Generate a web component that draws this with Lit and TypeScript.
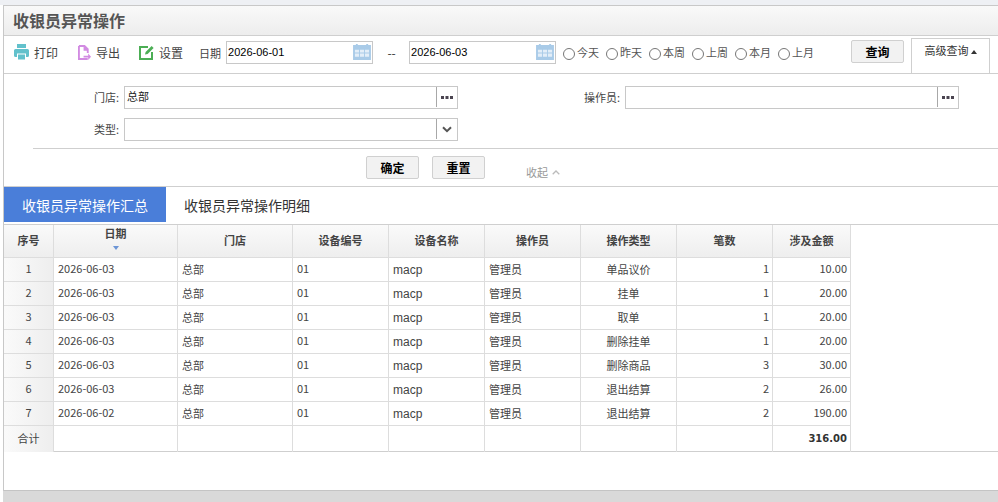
import { LitElement, html, css, svg } from 'lit';
import { customElement } from 'lit/decorators.js';

const columns = ['日期', '门店', '设备编号', '设备名称', '操作员', '操作类型', '笔数', '涉及金额'];

const rows = [
  ['2026-06-03', '单品议价', '1', '10.00'],
  ['2026-06-03', '挂单', '1', '20.00'],
  ['2026-06-03', '取单', '1', '20.00'],
  ['2026-06-03', '删除挂单', '1', '20.00'],
  ['2026-06-03', '删除商品', '3', '30.00'],
  ['2026-06-03', '退出结算', '2', '26.00'],
  ['2026-06-02', '退出结算', '2', '190.00'],
];

const ranges = ['今天', '昨天', '本周', '上周', '本月', '上月'];

const calendarIcon = svg`<svg class="cal" width="18" height="16" viewBox="0 0 19 17">
  <path d="M0 1h3v-1h2v1h9v-1h2v1h3v16h-19z" fill="#a9cbe8"/>
  <path d="M2 6h4.300v3h-4.300zM7.300 6h4.400v3h-4.400zM12.700 6h4.300v3h-4.300zM2 10h4.300v3.500h-4.300zM7.300 10h4.400v3.500h-4.400zM12.700 10h4.300v3.500h-4.300z" fill="#e3eef8"/>
</svg>`;

const moreIcon = svg`<svg width="12" height="3" viewBox="0 0 12 3"><path d="M0 0h3v3h-3zM4.500 0h3v3h-3zM9 0h3v3h-3z" fill="#4a4450"/></svg>`;

const chevronIcon = svg`<svg width="10" height="7" viewBox="0 0 10 7"><path d="M1 1.200l4 4 4-4" fill="none" stroke="#555" stroke-width="2"/></svg>`;

const printIcon = svg`<svg width="15" height="16" viewBox="0 0 15 16">
  <path d="M3 0h9v4h-9zM1.500 5h12a1.500 1.500 0 0 1 1.500 1.500v5a1.500 1.500 0 0 1-1.500 1.500h-1.500v-3.500h-9v3.500h-1.500a1.500 1.500 0 0 1-1.500-1.500v-5a1.500 1.500 0 0 1 1.500-1.500zM4 10.500h7v5h-7z" fill="#62c1cc"/>
</svg>`;

const exportIcon = svg`<svg width="13" height="15" viewBox="0 0 14 16">
  <path d="M1 1h6l3.500 3.500v4M10.500 15h-9.500v-14M7 1v4h3.500" fill="none" stroke="#d28be2" stroke-width="2"/>
  <path d="M6 11.500h5v-2.500l3 3.500-3 3.500v-2.500h-5z" fill="#d28be2"/>
</svg>`;

const settingIcon = svg`<svg width="15" height="15" viewBox="0 0 15 15">
  <path d="M9 2h-8v12h12v-7" fill="none" stroke="#4cae55" stroke-width="2"/>
  <path d="M6 9.500l.6-2.500 6-6 2 2-6 6z" fill="#4cae55"/>
</svg>`;

@customElement('app-root')
export class AppRoot extends LitElement {
  static styles = css`
    :host {
      display: block;
      height: 502px;
      overflow: hidden;
      background: #fff;
      color: #333;
      font: 12px 'Noto Sans CJK SC', 'Liberation Sans', sans-serif;
    }
    .page {
      height: 502px;
      display: flex;
      flex-direction: column;
      box-sizing: border-box;
      padding-top: 5px;
      background: linear-gradient(#eef0f4 5px, #fff 5px);
    }
    .frame {
      flex: none;
      height: 486px;
      box-sizing: border-box;
      margin-left: 3px;
      border-left: 1px solid #c8c8c8;
      border-top: 1px solid #c8c8c8;
      border-bottom: 1px solid #c4c4c4;
      background: #fff;
    }
    .footer {
      flex: 1;
      margin-left: 3px;
      background: #d9d9d9;
    }
    .title {
      height: 29px;
      box-sizing: border-box;
      padding: 0 9px;
      font-size: 16px;
      line-height: 28px;
      font-weight: 700;
      color: #555;
      background: linear-gradient(#f9f9f9, #ededed);
    }
    .toolbar {
      height: 39px;
      box-sizing: border-box;
      display: flex;
      align-items: center;
      padding: 0 8px 5px 10px;
      border-top: 1px solid #cfcfcf;
      border-bottom: 1px solid #cfcfcf;
    }
    .tool {
      display: flex;
      align-items: center;
      gap: 5px;
      color: #444;
      margin-right: 20px;
      white-space: nowrap;
    }
    .tool + .tool { margin-right: 19px; }
    .tool svg { flex: none; }
    .date-label { margin: 2px 5px 0 -3px; color: #444; font-size: 11px; }
    .date {
      width: 147px;
      height: 23px;
      box-sizing: border-box;
      display: flex;
      align-items: center;
      border: 1px solid #c8c8c8;
      padding-right: 1px;
      background: #fff;
    }
    .date input {
      flex: 1;
      min-width: 0;
      border: 0;
      outline: 0;
      padding: 0 0 0 1px;
      background: transparent;
      color: #000;
      font: 11px 'Liberation Sans', sans-serif;
    }
    .cal { flex: none; }
    .dash { width: 36px; padding-left: 1px; box-sizing: border-box; text-align: center; color: #333; }
    .ranges { display: flex; margin-left: 7px; }
    .range {
      display: flex;
      align-items: center;
      gap: 2px;
      width: 43px;
      color: #555;
      font-size: 11px;
      white-space: nowrap;
    }
    .range input { width: 12px; height: 12px; margin: 4px 0 0 0; flex: none; }
    .btn {
      height: 23px;
      box-sizing: border-box;
      padding: 0;
      border: 1px solid #d0d0d0;
      border-radius: 2px;
      background: #f2f2f2;
      color: #000;
      font: 700 12px 'Noto Sans CJK SC', sans-serif;
    }
    .query { width: 53px; margin-left: auto; margin-bottom: 2px; }
    .advanced {
      align-self: flex-start;
      width: 79px;
      height: 36px;
      box-sizing: border-box;
      margin: 2px 0 0 7px;
      border: 1px solid #cfcfcf;
      border-bottom: 0;
      text-align: center;
      font-size: 11px;
      line-height: 22px;
      color: #333;
      white-space: nowrap;
    }
    .advanced i {
      display: inline-block;
      border: 3px solid transparent;
      border-top: 0;
      border-bottom: 4px solid #333;
      margin-left: 2px;
      vertical-align: 1px;
    }
    .filter {
      height: 113px;
      box-sizing: border-box;
      padding-top: 12px;
      border-bottom: 1px solid #cfcfcf;
    }
    .fields {
      display: grid;
      grid-template-columns: 120px 334px 167px 334px;
      grid-auto-rows: 23px;
      row-gap: 9px;
      align-items: center;
    }
    .fields label { text-align: right; padding: 0 5px 2px 0; color: #444; font-size: 11px; }
    .field {
      height: 23px;
      box-sizing: border-box;
      display: flex;
      border: 1px solid #c8c8c8;
      background: #fff;
    }
    .field span {
      flex: 1;
      padding-left: 2px;
      font-size: 11px;
      line-height: 18px;
      color: #222;
    }
    .field b {
      width: 20px;
      display: flex;
      align-items: center;
      justify-content: center;
      border-left: 1px solid #a8a8a8;
      margin-bottom: 1px;
    }
    .rule { height: 1px; background: #cfcfcf; margin: 7px 0 7px 29px; }
    .actions { display: flex; padding-left: 362px; }
    .actions .btn { width: 53px; margin-right: 13px; }
    .collapse {
      display: flex;
      align-items: center;
      gap: 4px;
      margin: 8px 0 0 28px;
      color: #999;
      font-size: 11px;
      height: 16px;
    }
    .tabs {
      display: flex;
      height: 38px;
      box-sizing: border-box;
      padding-bottom: 2px;
      border-bottom: 1px solid #cfcfcf;
      font-size: 14px;
      line-height: 36px;
    }
    .tab { padding: 0 18px; color: #333; }
    .tab.active { background: #4a7ed9; color: #fff; }
    .table {
      height: 227px;
      box-sizing: border-box;
      border-bottom: 1px solid #cfcfcf;
      font-size: 11px;
    }
    .row {
      display: grid;
      grid-template-columns: 50px 124px 115px 96px 96px 96px 96px 96px 78px;
      grid-template-rows: 24px;
      width: 847px;
      height: 24px;
    }
    .row > div {
      box-sizing: border-box;
      border-right: 1px solid #ddd;
      border-bottom: 1px solid #ddd;
      padding: 0 4px;
      line-height: 23px;
      white-space: nowrap;
      color: #444;
    }
    .row.head { height: 33px; grid-template-rows: 33px; }
    .row.head > div {
      background: linear-gradient(#fafafa, #eee);
      font-weight: 700;
      text-align: center;
      line-height: 31px;
      color: #444;
    }
    .row.head .sorted { line-height: 16px; }
    .sorted i {
      display: block;
      width: 0;
      margin: 5px auto 0;
      border: 3.500px solid transparent;
      border-top: 4px solid #6c95d6;
      border-bottom: 0;
    }
    .row.total { height: 26px; grid-template-rows: 26px; }
    .row.total > div { line-height: 25px; border-bottom: 0; }
    .row > .no {
      background: linear-gradient(90deg, #fafafa, #eee);
      text-align: center;
    }
    .row > .digits { line-height: 21px; }
    .row > .macp { padding-top: 1px; font: 12px/22px 'Liberation Sans', sans-serif; }
    .row > .c { text-align: center; }
    .row > .r { text-align: right; padding-right: 3px; }
    .row.total > .sum { font: 700 10px/25px 'DejaVu Sans', sans-serif; color: #333; }
  `;

  render() {
    return html`
      <div class="page">
        <div class="frame">
          <div class="title">收银员异常操作</div>
          <div class="toolbar">
            <span class="tool">${printIcon}打印</span>
            <span class="tool">${exportIcon}导出</span>
            <span class="tool">${settingIcon}设置</span>
            <span class="date-label">日期</span>
            <div class="date"><input readonly value="2026-06-01" />${calendarIcon}</div>
            <span class="dash">--</span>
            <div class="date"><input readonly value="2026-06-03" />${calendarIcon}</div>
            <div class="ranges">
              ${ranges.map(r => html`<label class="range"><input type="radio" name="range" />${r}</label>`)}
            </div>
            <button class="btn query">查询</button>
            <div class="advanced">高级查询<i></i></div>
          </div>
          <div class="filter">
            <div class="fields">
              <label>门店:</label>
              <div class="field"><span>总部</span><b>${moreIcon}</b></div>
              <label>操作员:</label>
              <div class="field"><span></span><b>${moreIcon}</b></div>
              <label>类型:</label>
              <div class="field"><span></span><b>${chevronIcon}</b></div>
            </div>
            <div class="rule"></div>
            <div class="actions">
              <button class="btn">确定</button>
              <button class="btn">重置</button>
              <span class="collapse">收起
                <svg width="8" height="5" viewBox="0 0 8 5"><path d="M.7 4.300l3.300-3.300 3.300 3.300" fill="none" stroke="#bbb" stroke-width="1.300"/></svg>
              </span>
            </div>
          </div>
          <div class="tabs">
            <div class="tab active">收银员异常操作汇总</div>
            <div class="tab">收银员异常操作明细</div>
          </div>
          <div class="table">
            <div class="row head">
              <div>序号</div>
              ${columns.map((c, i) => i === 0
                ? html`<div class="sorted">${c}<i></i></div>`
                : html`<div>${c}</div>`)}
            </div>
            ${rows.map((r, i) => html`
              <div class="row">
                <div class="no digits">${i + 1}</div>
                <div class="digits">${r[0]}</div>
                <div>总部</div>
                <div class="digits">01</div>
                <div class="macp">macp</div>
                <div>管理员</div>
                <div class="c">${r[1]}</div>
                <div class="r digits">${r[2]}</div>
                <div class="r digits">${r[3]}</div>
              </div>
            `)}
            <div class="row total">
              <div class="no">合计</div>
              <div></div><div></div><div></div><div></div><div></div><div></div><div></div>
              <div class="r sum">316.00</div>
            </div>
          </div>
        </div>
        <div class="footer"></div>
      </div>
    `;
  }
}
